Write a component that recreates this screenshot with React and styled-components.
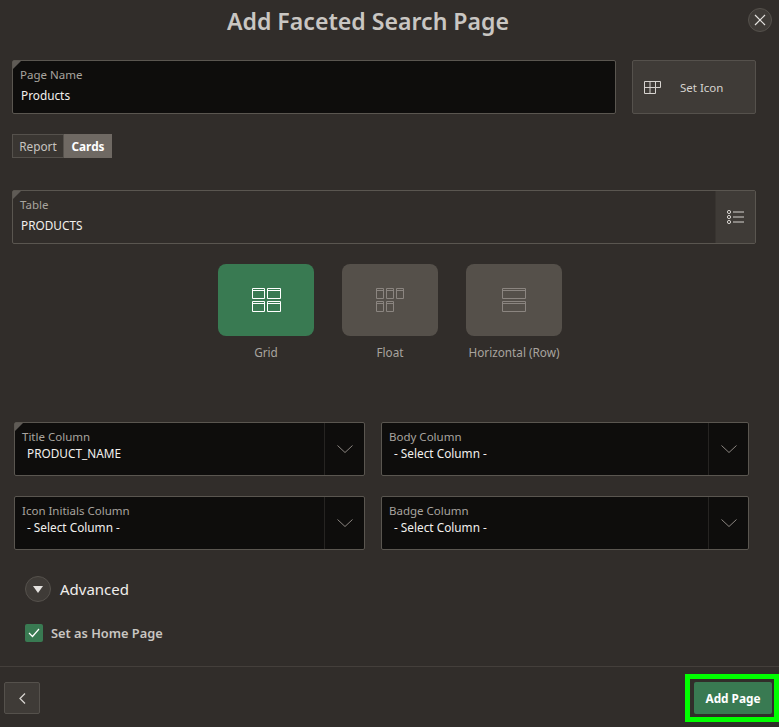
import styled, { createGlobalStyle } from "styled-components";

const GlobalStyle = createGlobalStyle`
  html, body {
    margin: 0;
    padding: 0;
    background: #312d2a;
  }
  * {
    box-sizing: border-box;
  }
`;

const Page = styled.div`
  width: 779px;
  height: 727px;
  background: #312d2a;
  font-family: "Noto Sans", "Open Sans", sans-serif;
  color: #d0ccc8;
  display: flex;
  flex-direction: column;
  overflow: hidden;
`;

const Header = styled.header`
  height: 60px;
  padding: 5px 55px 0 12px;
  display: flex;
  justify-content: center;
  position: relative;
`;

const Title = styled.h1`
  margin: 0;
  font-size: 23.1px;
  line-height: 32px;
  font-weight: 600;
  color: #c9c6c2;
`;

const CloseButton = styled.button`
  position: absolute;
  right: 7px;
  top: 8px;
  width: 24px;
  height: 24px;
  border-radius: 50%;
  border: 1px solid #55514c;
  background: #3f3b37;
  padding: 0;
  display: flex;
  align-items: center;
  justify-content: center;
`;

const NameRow = styled.div`
  display: flex;
  gap: 16px;
  padding: 0 23px 0 12px;
`;

const Field = styled.div`
  position: relative;
  flex: 1;
  height: 54px;
  background: ${(p) => (p.$muted ? "#312d2a" : "#0e0d0c")};
  border: 1px solid #5a5650;
  border-radius: 2px;
  display: flex;
  &::before {
    content: "";
    position: absolute;
    left: 0;
    top: 0;
    border-style: solid;
    border-width: 8px 8px 0 0;
    border-color: #5f5b56 transparent transparent transparent;
    display: ${(p) => (p.$marked ? "block" : "none")};
  }
`;

const FieldBody = styled.div`
  flex: 1;
  padding: 5px 0 0 7px;
  min-width: 0;
`;

const FieldLabel = styled.div`
  font-size: 11.5px;
  line-height: 18px;
  color: #a8a49f;
`;

const FieldValue = styled.div`
  font-size: 11.8px;
  line-height: ${(p) => (p.$tight ? "16px" : "18px")};
  margin-top: ${(p) => (p.$tight ? "-1px" : "2px")};
  padding-left: ${(p) => (p.$inset ? "5px" : "1px")};
  color: #f2f0ee;
`;

const SetIconButton = styled.button`
  width: 124px;
  height: 54px;
  background: #3f3b37;
  border: 1px solid #55514c;
  border-radius: 2px;
  display: flex;
  align-items: center;
  padding: 0 0 0 11px;
  gap: 18px;
  font: inherit;
  font-size: 11.5px;
  color: #d6d3cf;
`;

const Toggle = styled.div`
  display: flex;
  margin: 20px 0 0 12px;
  height: 24px;
`;

const ToggleItem = styled.div`
  width: ${(p) => p.$width}px;
  display: flex;
  align-items: center;
  justify-content: center;
  font-size: 11.8px;
  font-weight: ${(p) => (p.$on ? 700 : 400)};
  color: ${(p) => (p.$on ? "#ffffff" : "#c8c4c0")};
  background: ${(p) => (p.$on ? "#6f6963" : "#3a3632")};
  border: 1px solid ${(p) => (p.$on ? "#6f6963" : "#55514c")};
`;

const TableRow = styled.div`
  display: flex;
  margin: 32px 23px 0 12px;
`;

const ListButton = styled.div`
  width: 40px;
  background: #3f3b37;
  border-left: 1px solid #383430;
  display: flex;
  align-items: center;
  justify-content: center;
`;

const Tiles = styled.div`
  display: flex;
  justify-content: flex-start;
  gap: 28px;
  margin: 20px 0 0 218px;
`;

const Tile = styled.div`
  width: 96px;
  display: flex;
  flex-direction: column;
  align-items: center;
`;

const TileFace = styled.div`
  width: 96px;
  height: 72px;
  border-radius: 8px;
  background: ${(p) => (p.$on ? "#397a52" : "#55504a")};
  display: flex;
  align-items: center;
  justify-content: center;
`;

const TileLabel = styled.div`
  margin-top: 7px;
  margin-bottom: 1px;
  font-size: 11.75px;
  line-height: 18px;
  color: #a8a49f;
  white-space: nowrap;
`;

const ColumnGrid = styled.div`
  display: grid;
  grid-template-columns: 351px 368px;
  grid-auto-rows: 54px;
  column-gap: 16px;
  row-gap: 20px;
  margin: 60px 0 0 14px;
`;

const Chevron = styled.div`
  width: 40px;
  border-left: 1px solid #262422;
  display: flex;
  align-items: center;
  justify-content: center;
`;

const Advanced = styled.div`
  display: flex;
  align-items: center;
  gap: 9px;
  margin: 26px 0 0 25px;
  height: 26px;
  font-size: 15px;
  color: #f0eeec;
`;

const RoundToggle = styled.div`
  width: 26px;
  height: 26px;
  border-radius: 50%;
  background: #3f3b37;
  border: 1px solid #55514c;
  display: flex;
  align-items: center;
  justify-content: center;
`;

const HomeRow = styled.div`
  display: flex;
  align-items: center;
  gap: 8px;
  margin: 22px 0 0 25px;
  font-size: 12.8px;
  font-weight: 600;
  color: #c9c6c2;
`;

const CheckBox = styled.div`
  width: 18px;
  height: 18px;
  border-radius: 2px;
  background: #397a52;
  display: flex;
  align-items: center;
  justify-content: center;
`;

const Footer = styled.footer`
  margin-top: 24px;
  border-top: 1px solid #443f3b;
  flex: 1;
  display: flex;
  justify-content: space-between;
  padding: 7px 0 0 4px;
`;

const BackButton = styled.button`
  margin-top: 8px;
  width: 36px;
  height: 32px;
  background: #3f3b37;
  border: 1px solid #55514c;
  border-radius: 2px;
  padding: 0;
  display: flex;
  align-items: center;
  justify-content: center;
`;

const Highlight = styled.div`
  width: 94px;
  height: 48px;
  border: 5px solid #00ff00;
  padding: 3px 2px 3px 4px;
`;

const AddButton = styled.button`
  width: 78px;
  height: 32px;
  padding: 0;
  border: none;
  border-radius: 2px;
  background: #397a52;
  color: #ffffff;
  font: inherit;
  font-size: 11.8px;
  font-weight: 700;
`;

const Outline = ({ stroke, width, height, children }) => (
  <svg width={width} height={height} viewBox={`0 0 ${width} ${height}`} fill="none" stroke={stroke} strokeWidth="1">
    {children}
  </svg>
);

const GridIcon = () => (
  <Outline stroke="#ffffff" width={29} height={24}>
    <path d="M.5.5h12v10h-12zM.5 2.5h12M15.5.5h13v10h-13zM15.5 2.5h13M.5 13.5h12v10h-12zM.5 15.5h12M15.5 13.5h13v10h-13zM15.5 15.5h13" />
  </Outline>
);

const FloatIcon = () => (
  <Outline stroke="#8b8580" width={28} height={24}>
    <path d="M.5.5h7v10h-7zM.5 2.5h7M10.5.5h7v10h-7zM10.5 2.5h7M20.5.5h7v10h-7zM20.5 2.5h7M.5 13.5h7v10h-7zM.5 15.5h7M10.5 13.5h7v10h-7zM10.5 15.5h7" />
  </Outline>
);

const RowIcon = () => (
  <Outline stroke="#8b8580" width={24} height={24}>
    <path d="M.5.5h23v10h-23zM.5 2.5h23M.5 13.5h23v10h-23zM.5 15.5h23" />
  </Outline>
);

const SetIcon = () => (
  <Outline stroke="#d6d3cf" width={18} height={13}>
    <path d="M.5.5h16v6h-5v6h-11zM.5 6.5h11M6 .5v12M11.5.5v6" />
  </Outline>
);

const ListIcon = () => (
  <svg width="17" height="14" viewBox="0 0 17 14" fill="none">
    <g stroke="#d6d3cf" strokeWidth="1">
      <circle cx="2" cy="2" r="1.6" />
      <circle cx="2" cy="7" r="1.6" />
      <circle cx="2" cy="12" r="1.6" />
      <path d="M6 2h11M6 7h11M6 12h11" />
    </g>
  </svg>
);

const ChevronDown = () => (
  <svg width="16" height="8" viewBox="0 0 16 8" fill="none" stroke="#8b8580" strokeWidth="1">
    <path d="M.5.5L8 7.5 15.5.5" />
  </svg>
);

const columns = [
  { label: "Title Column", value: "PRODUCT_NAME", marked: true },
  { label: "Body Column", value: "- Select Column -" },
  { label: "Icon Initials Column", value: "- Select Column -" },
  { label: "Badge Column", value: "- Select Column -" },
];

const App = () => {
  return (
    <Page>
      <GlobalStyle />
      <Header>
        <Title>Add Faceted Search Page</Title>
        <CloseButton aria-label="Close">
          <svg width="12" height="12" viewBox="0 0 12 12" fill="none" stroke="#e4e2df" strokeWidth="1.2">
            <path d="M1 1l10 10M11 1L1 11" />
          </svg>
        </CloseButton>
      </Header>

      <NameRow>
        <Field $marked>
          <FieldBody>
            <FieldLabel>Page Name</FieldLabel>
            <FieldValue>Products</FieldValue>
          </FieldBody>
        </Field>
        <SetIconButton>
          <SetIcon />
          Set Icon
        </SetIconButton>
      </NameRow>

      <Toggle>
        <ToggleItem $width={52}>Report</ToggleItem>
        <ToggleItem $width={48} $on>
          Cards
        </ToggleItem>
      </Toggle>

      <TableRow>
        <Field $muted $marked>
          <FieldBody>
            <FieldLabel>Table</FieldLabel>
            <FieldValue>PRODUCTS</FieldValue>
          </FieldBody>
          <ListButton>
            <ListIcon />
          </ListButton>
        </Field>
      </TableRow>

      <Tiles>
        <Tile>
          <TileFace $on>
            <GridIcon />
          </TileFace>
          <TileLabel>Grid</TileLabel>
        </Tile>
        <Tile>
          <TileFace>
            <FloatIcon />
          </TileFace>
          <TileLabel>Float</TileLabel>
        </Tile>
        <Tile>
          <TileFace>
            <RowIcon />
          </TileFace>
          <TileLabel>Horizontal (Row)</TileLabel>
        </Tile>
      </Tiles>

      <ColumnGrid>
        {columns.map((c) => (
          <Field key={c.label} $marked={c.marked}>
            <FieldBody>
              <FieldLabel>{c.label}</FieldLabel>
              <FieldValue $tight $inset>
                {c.value}
              </FieldValue>
            </FieldBody>
            <Chevron>
              <ChevronDown />
            </Chevron>
          </Field>
        ))}
      </ColumnGrid>

      <Advanced>
        <RoundToggle>
          <svg width="10" height="7" viewBox="0 0 10 7">
            <path d="M0 0h10L5 7z" fill="#e4e2df" />
          </svg>
        </RoundToggle>
        Advanced
      </Advanced>

      <HomeRow>
        <CheckBox>
          <svg width="12" height="10" viewBox="0 0 12 10" fill="none" stroke="#ffffff" strokeWidth="1.2">
            <path d="M1 5l3.5 3.5L11 1" />
          </svg>
        </CheckBox>
        Set as Home Page
      </HomeRow>

      <Footer>
        <BackButton aria-label="Back">
          <svg width="7" height="11" viewBox="0 0 7 11" fill="none" stroke="#d6d3cf" strokeWidth="1.3">
            <path d="M6 .5l-5 5 5 5" />
          </svg>
        </BackButton>
        <Highlight>
          <AddButton>Add Page</AddButton>
        </Highlight>
      </Footer>
    </Page>
  );
};

export default App;
